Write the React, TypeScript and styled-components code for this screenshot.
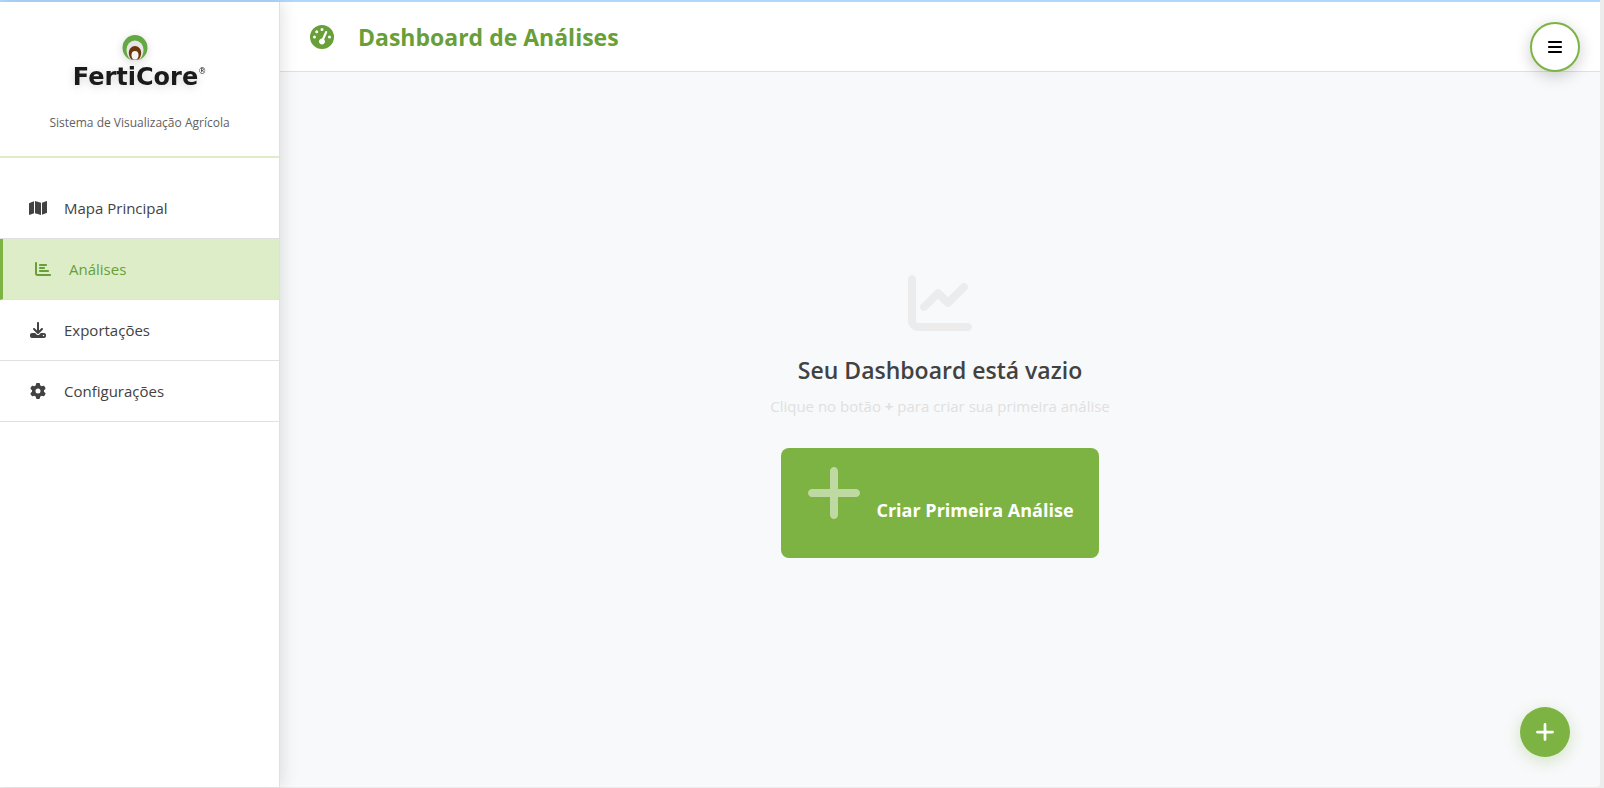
import React from "react";
import styled, { createGlobalStyle, css } from "styled-components";
import {
  FaBars,
  FaChartBar,
  FaChartLine,
  FaDownload,
  FaGaugeHigh,
  FaGear,
  FaMap,
  FaPlus,
} from "react-icons/fa6";

const color = {
  green: "#7cb342",
  greenDark: "#689f38",
  greenLight: "#dcedc8",
  line: "#e0e0e0",
  text: "#424242",
  muted: "#616161",
  surface: "#ffffff",
  canvas: "#f8f9fb",
};

const GlobalStyle = createGlobalStyle`
  *, *::before, *::after { box-sizing: border-box; }
  body {
    margin: 0;
    background: #ececec;
    color: ${color.text};
    font-family: "Segoe UI", "Open Sans", "Noto Sans", sans-serif;
    font-size: 15px;
  }
  h1, h2, p, ul { margin: 0; padding: 0; }
  ul { list-style: none; }
  button { font-family: inherit; cursor: pointer; }
`;

const Frame = styled.div`
  display: flex;
  min-height: 100vh;
  padding: 0 4px 1px 0;
`;

const Shell = styled.div`
  position: relative;
  display: flex;
  flex: 1;
  border-top: 2px solid #b0d8ff;
  border-bottom-right-radius: 4px;
  background: ${color.canvas};
`;

const Sidebar = styled.aside`
  position: relative;
  z-index: 1;
  flex: 0 0 280px;
  border-right: 1px solid ${color.line};
  background: ${color.surface};
  box-shadow: 2px 0 16px rgba(0, 0, 0, 0.12);
`;

const Brand = styled.div`
  display: flex;
  flex-direction: column;
  align-items: center;
  height: 156px;
  padding-top: 32px;
  border-bottom: 2px solid ${color.greenLight};
`;

const Logo = styled.div`
  display: flex;
  flex-direction: column;
  align-items: center;
  height: 73px;
  padding-right: 8px;
  filter: drop-shadow(0 2px 4px rgba(0, 0, 0, 0.16));
`;

const LogoMark = styled.svg`
  width: 26px;
  height: 26px;
`;

const LogoName = styled.span`
  position: relative;
  color: #1a1a1a;
  font-family: "DejaVu Sans", sans-serif;
  font-size: 24px;
  font-weight: 700;
  line-height: 34px;
`;

const Registered = styled.span`
  position: absolute;
  top: 0;
  left: 100%;
  font-size: 8px;
  font-weight: 400;
  line-height: 24px;
`;

const Tagline = styled.p`
  color: ${color.muted};
  font-size: 12px;
  line-height: 32px;
`;

const Nav = styled.nav`
  padding-top: 20px;
`;

const NavLink = styled.a<{ $active?: boolean }>`
  display: flex;
  align-items: center;
  gap: 16px;
  height: 61px;
  padding: 0 28px;
  border-bottom: 1px solid ${color.line};
  color: ${color.text};
  text-decoration: none;

  ${({ $active }) =>
    $active &&
    css`
      padding-left: 30px;
      border-left: 3px solid ${color.green};
      background: ${color.greenLight};
      color: ${color.greenDark};
    `}
`;

const NavIcon = styled.span`
  display: flex;
  justify-content: center;
  width: 20px;

  svg {
    width: 18px;
    height: 16px;
  }
`;

const Main = styled.main`
  display: flex;
  flex: 1;
  flex-direction: column;
`;

const TopBar = styled.header`
  display: flex;
  align-items: center;
  gap: 24px;
  height: 70px;
  padding: 0 30px;
  border-bottom: 1px solid ${color.line};
  background: ${color.surface};
  color: ${color.greenDark};

  svg {
    width: 24px;
    height: 24px;
  }
`;

const PageTitle = styled.h1`
  font-size: 23px;
  font-weight: 700;
  line-height: 32px;
`;

const EmptyState = styled.section`
  display: flex;
  flex: 1;
  flex-direction: column;
  align-items: center;
  justify-content: center;
  padding-bottom: 31px;
`;

const EmptyIcon = styled(FaChartLine)`
  width: 64px;
  height: 64px;
  margin-bottom: 19px;
  color: #ececec;
`;

const EmptyTitle = styled.h2`
  font-size: 23px;
  font-weight: 600;
  line-height: 32px;
`;

const EmptyHint = styled.p`
  margin: 8px 0 30px;
  color: ${color.line};
  line-height: 24px;
`;

const CreateButton = styled.button`
  display: flex;
  gap: 14px;
  height: 110px;
  padding: 13px 25px;
  border: 0;
  border-radius: 8px;
  background: ${color.green};
  color: ${color.surface};
  font-size: 18px;
  font-weight: 700;
  line-height: 98px;

  svg {
    flex: none;
    width: 56px;
    height: 64px;
    opacity: 0.5;
  }
`;

const RoundButton = styled.button`
  position: absolute;
  z-index: 2;
  display: flex;
  align-items: center;
  justify-content: center;
  width: 50px;
  height: 50px;
  padding: 0;
  border-radius: 50%;
`;

const MenuButton = styled(RoundButton)`
  top: 20px;
  right: 20px;
  border: 2px solid ${color.green};
  background: ${color.surface};
  color: #000000;
  box-shadow: 0 4px 16px rgba(0, 0, 0, 0.2);

  svg {
    width: 14px;
    height: 16px;
  }
`;

const AddButton = styled(RoundButton)`
  right: 30px;
  bottom: 30px;
  border: 0;
  background: ${color.green};
  color: ${color.surface};
  box-shadow: 0 4px 16px rgba(124, 179, 66, 0.3);

  svg {
    width: 20px;
    height: 22px;
  }
`;

const links = [
  { label: "Mapa Principal", href: "#mapa", Icon: FaMap },
  { label: "Análises", href: "#analises", Icon: FaChartBar, active: true },
  { label: "Exportações", href: "#exportacoes", Icon: FaDownload },
  { label: "Configurações", href: "#configuracoes", Icon: FaGear },
];

export default function App() {
  return (
    <Frame>
      <GlobalStyle />
      <Shell>
        <Sidebar>
          <Brand>
            <Logo>
              <LogoMark viewBox="0 0 26 26" aria-hidden="true">
                <path
                  fill="#64a844"
                  d="M8 25.500C3.500 23.500 .5 19 .5 13.500a12.500 12.500 0 0 1 25 0c0 5.500-3 10-7.500 12z"
                />
                <path
                  fill="#e6e6e6"
                  d="M8.500 25.500C6 23.500 4.500 19.500 4.500 15.500a8.500 9 0 0 1 17 0c0 4-1.500 8-4 10z"
                />
                <path
                  fill="#693708"
                  d="M9.500 25.500C7.500 23.500 6.800 21 6.800 18.500a6.200 6.500 0 0 1 12.400 0c0 2.500-.7 5-2.700 7z"
                />
                <ellipse cx="13" cy="21.200" rx="3.500" ry="4.200" fill="#f4f4f4" />
              </LogoMark>
              <LogoName>
                FertiCore<Registered>®</Registered>
              </LogoName>
            </Logo>
            <Tagline>Sistema de Visualização Agrícola</Tagline>
          </Brand>
          <Nav>
            <ul>
              {links.map(({ label, href, Icon, active }) => (
                <li key={href}>
                  <NavLink
                    href={href}
                    $active={active}
                    aria-current={active ? "page" : undefined}
                  >
                    <NavIcon>
                      <Icon />
                    </NavIcon>
                    {label}
                  </NavLink>
                </li>
              ))}
            </ul>
          </Nav>
        </Sidebar>
        <Main>
          <TopBar>
            <FaGaugeHigh />
            <PageTitle>Dashboard de Análises</PageTitle>
          </TopBar>
          <EmptyState>
            <EmptyIcon />
            <EmptyTitle>Seu Dashboard está vazio</EmptyTitle>
            <EmptyHint>
              Clique no botão <strong>+</strong> para criar sua primeira análise
            </EmptyHint>
            <CreateButton type="button">
              <FaPlus />
              Criar Primeira Análise
            </CreateButton>
          </EmptyState>
        </Main>
        <MenuButton type="button" aria-label="Menu">
          <FaBars />
        </MenuButton>
        <AddButton type="button" aria-label="Nova análise">
          <FaPlus />
        </AddButton>
      </Shell>
    </Frame>
  );
}
